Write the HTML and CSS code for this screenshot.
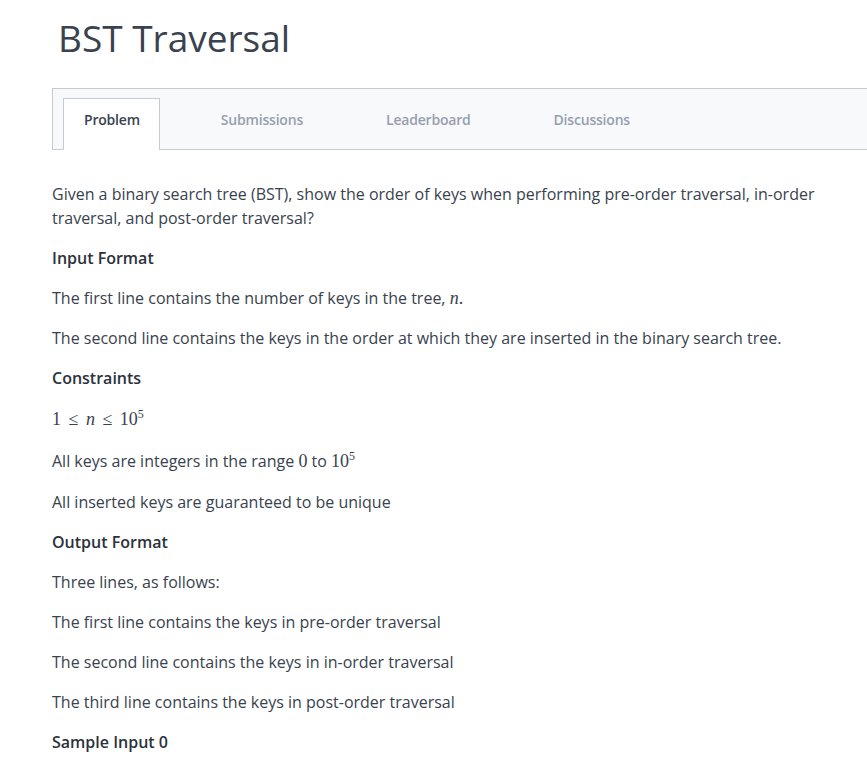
FILE: index.html
```html
<!DOCTYPE html>
<html>
<head>
<meta charset="utf-8">
<link rel="stylesheet" href="styles.css">
</head>
<body>
<div class="page">
  <h1 class="title">BST Traversal</h1>
  <div class="tabs">
    <div class="tab active">Problem</div>
    <div class="tab">Submissions</div>
    <div class="tab">Leaderboard</div>
    <div class="tab">Discussions</div>
  </div>
  <div class="content">
    <p class="text">Given a binary search tree (BST), show the order of keys when performing pre-order traversal, in-order traversal, and post-order traversal?</p>
    <p class="heading">Input Format</p>
    <p class="text">The first line contains the number of keys in the tree, <span class="math"><i>n</i>.</span></p>
    <p class="text">The second line contains the keys in the order at which they are inserted in the binary search tree.</p>
    <p class="heading">Constraints</p>
    <p class="text mathline"><span class="math">1 <span class="op">≤</span> <i>n</i> <span class="op">≤</span> 10<sup>5</sup></span></p>
    <p class="text mathline">All keys are integers in the range <span class="math">0</span> to <span class="math">10<sup>5</sup></span></p>
    <p class="text">All inserted keys are guaranteed to be unique</p>
    <p class="heading">Output Format</p>
    <p class="text">Three lines, as follows:</p>
    <p class="text">The first line contains the keys in pre-order traversal</p>
    <p class="text">The second line contains the keys in in-order traversal</p>
    <p class="text">The third line contains the keys in post-order traversal</p>
    <p class="heading">Sample Input 0</p>
  </div>
</div>
</body>
</html>
```
FILE: styles.css
```css
html, body {
  margin: 0;
  padding: 0;
  background: #ffffff;
}
body {
  font-family: "Open Sans", "Liberation Sans", sans-serif;
  color: #39424e;
  overflow: hidden;
}
.page {
  padding-left: 52px;
}
.title {
  margin: 0;
  padding: 12px 0 0 6px;
  height: 76px;
  box-sizing: border-box;
  font-size: 37px;
  font-weight: 400;
  line-height: 52px;
  color: #39424e;
}
.tabs {
  display: flex;
  align-items: flex-end;
  gap: 39px;
  height: 62px;
  box-sizing: border-box;
  margin-top: 12px;
  padding-left: 10px;
  background: #f8f9fb;
  border: 1px solid #c5cad3;
  border-right: none;
}
.tab {
  padding: 0 21px;
  height: 52px;
  margin-bottom: -1px;
  line-height: 42px;
  font-size: 14px;
  font-weight: 600;
  letter-spacing: -0.2px;
  color: #979faf;
  box-sizing: border-box;
  border: 1px solid transparent;
  border-bottom: none;
}
.tab.active {
  background: #ffffff;
  color: #39424e;
  padding: 0 19px 0 20px;
  border-color: #c5cad3;
}
.content {
  padding-top: 32px;
  padding-right: 40px;
}
.text, .heading {
  margin: 0 0 16px 0;
  font-size: 16px;
  line-height: 24px;
}
.mathline {
  line-height: 26px;
}
.heading {
  font-weight: 600;
  color: #2b323b;
}
.math {
  font-family: "Liberation Serif", "DejaVu Serif", serif;
  font-size: 18px;
}
.math i {
  font-style: italic;
}
.op {
  padding: 0 3px;
}
.math sup {
  font-size: 12px;
  line-height: 0;
  vertical-align: 7px;
}
```
